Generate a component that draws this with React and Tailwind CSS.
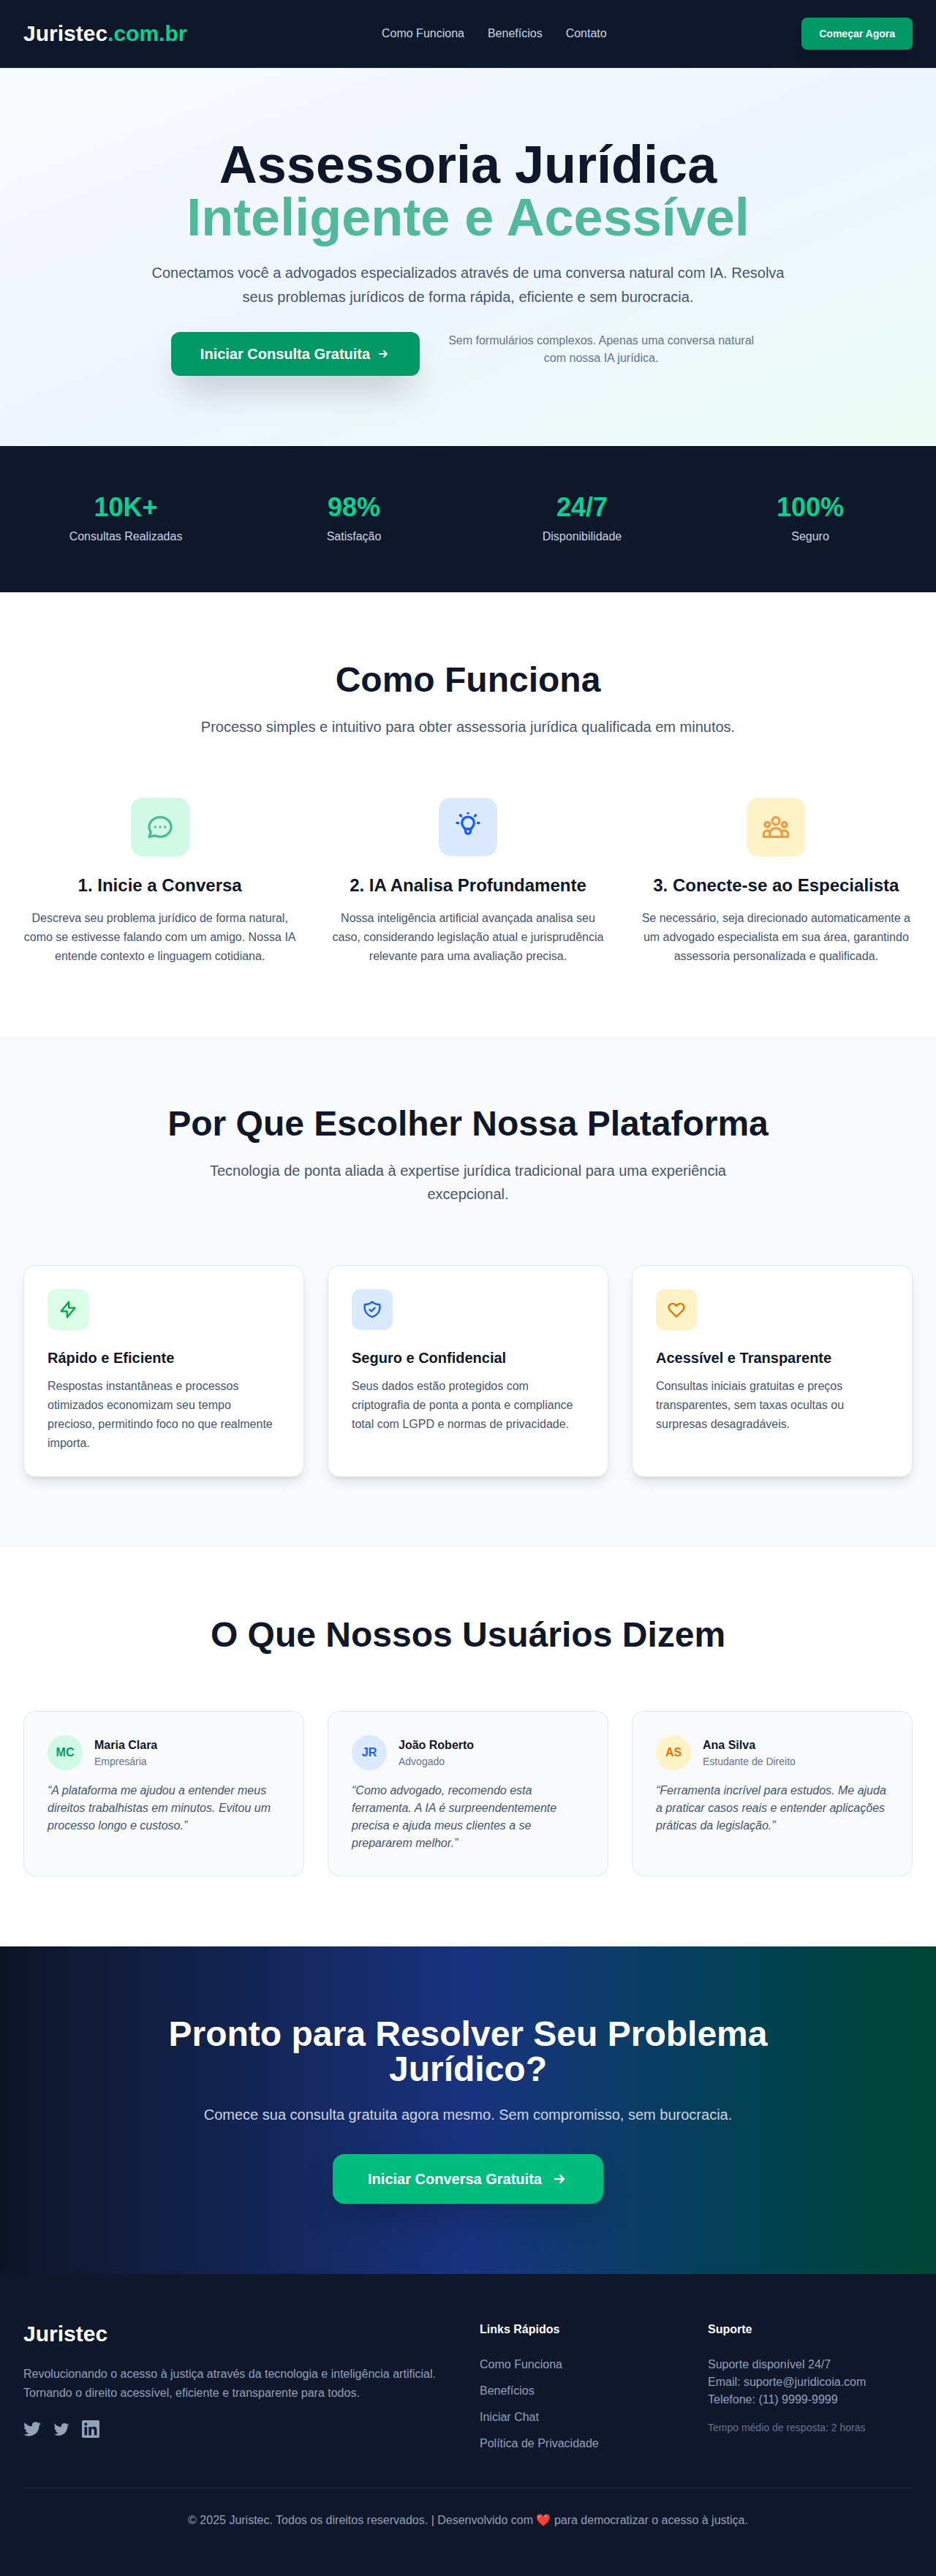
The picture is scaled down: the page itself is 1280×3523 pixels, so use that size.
const iconPaths = {
  chat: "M8 12h.01M12 12h.01M16 12h.01M21 12c0 4.418-4.03 8-9 8a9.863 9.863 0 01-4.255-.949L3 20l1.395-3.72C3.512 15.042 3 13.574 3 12c0-4.418 4.03-8 9-8s9 3.582 9 8z",
  bulb: "M9.663 17h4.673M12 3v1m6.364 1.636l-.707.707M21 12h-1M4 12H3m3.343-5.657l-.707-.707m2.828 9.9a5 5 0 117.072 0l-.548.547A3.374 3.374 0 0014 18.469V19a2 2 0 11-4 0v-.531c0-.895-.356-1.754-.988-2.386l-.548-.547z",
  group: "M17 20h5v-2a3 3 0 00-5.356-1.857M17 20H7m10 0v-2c0-.656-.126-1.283-.356-1.857M7 20H2v-2a3 3 0 015.356-1.857M7 20v-2c0-.656.126-1.283.356-1.857m0 0a5.002 5.002 0 019.288 0M15 7a3 3 0 11-6 0 3 3 0 016 0zm6 3a2 2 0 11-4 0 2 2 0 014 0zM7 10a2 2 0 11-4 0 2 2 0 014 0z",
  bolt: "M13 10V3L4 14h7v7l9-11h-7z",
  shield: "M9 12l2 2 4-4m5.618-4.016A11.955 11.955 0 0112 2.944a11.955 11.955 0 01-8.618 3.04A12.02 12.02 0 003 9c0 5.591 3.824 10.29 9 11.622 5.176-1.332 9-6.03 9-11.622 0-1.042-.133-2.052-.382-3.016z",
  heart: "M4.318 6.318a4.5 4.5 0 000 6.364L12 20.364l7.682-7.682a4.5 4.5 0 00-6.364-6.364L12 7.636l-1.318-1.318a4.5 4.5 0 00-6.364 0z",
};

function Icon({ d, className, viewBox = "0 0 24 24" }) {
  return (
    <svg className={className} viewBox={viewBox} fill="none" stroke="currentColor" strokeWidth="2" strokeLinecap="round" strokeLinejoin="round">
      <path d={d} />
    </svg>
  );
}

function Arrow({ className }) {
  return (
    <svg className={className} viewBox="0 0 20 20" fill="currentColor">
      <path fillRule="evenodd" clipRule="evenodd" d="M10.293 5.293a1 1 0 011.414 0l4 4a1 1 0 010 1.414l-4 4a1 1 0 01-1.414-1.414L12.586 11H5a1 1 0 110-2h7.586l-2.293-2.293a1 1 0 010-1.414z" />
    </svg>
  );
}

const stats = [
  ["10K+", "Consultas Realizadas"],
  ["98%", "Satisfação"],
  ["24/7", "Disponibilidade"],
  ["100%", "Seguro"],
];

const steps = [
  {
    icon: iconPaths.chat,
    box: "bg-emerald-100 text-[#4dbb96]",
    title: "1. Inicie a Conversa",
    text: "Descreva seu problema jurídico de forma natural, como se estivesse falando com um amigo. Nossa IA entende contexto e linguagem cotidiana.",
  },
  {
    icon: iconPaths.bulb,
    viewBox: "0 3.35 24 24",
    box: "bg-blue-100 text-blue-600",
    title: "2. IA Analisa Profundamente",
    text: "Nossa inteligência artificial avançada analisa seu caso, considerando legislação atual e jurisprudência relevante para uma avaliação precisa.",
  },
  {
    icon: iconPaths.group,
    box: "bg-amber-100 text-[#ec9d46]",
    title: "3. Conecte-se ao Especialista",
    text: "Se necessário, seja direcionado automaticamente a um advogado especialista em sua área, garantindo assessoria personalizada e qualificada.",
  },
];

const benefits = [
  {
    icon: iconPaths.bolt,
    box: "bg-green-100 text-green-600",
    title: "Rápido e Eficiente",
    text: "Respostas instantâneas e processos otimizados economizam seu tempo precioso, permitindo foco no que realmente importa.",
  },
  {
    icon: iconPaths.shield,
    box: "bg-blue-100 text-blue-600",
    title: "Seguro e Confidencial",
    text: "Seus dados estão protegidos com criptografia de ponta a ponta e compliance total com LGPD e normas de privacidade.",
  },
  {
    icon: iconPaths.heart,
    box: "bg-amber-100 text-amber-600",
    title: "Acessível e Transparente",
    text: "Consultas iniciais gratuitas e preços transparentes, sem taxas ocultas ou surpresas desagradáveis.",
  },
];

const testimonials = [
  {
    initials: "MC",
    color: "bg-emerald-100 text-emerald-600",
    name: "Maria Clara",
    role: "Empresária",
    quote: "“A plataforma me ajudou a entender meus direitos trabalhistas em minutos. Evitou um processo longo e custoso.”",
  },
  {
    initials: "JR",
    color: "bg-blue-100 text-blue-600",
    name: "João Roberto",
    role: "Advogado",
    quote: "“Como advogado, recomendo esta ferramenta. A IA é surpreendentemente precisa e ajuda meus clientes a se prepararem melhor.”",
  },
  {
    initials: "AS",
    color: "bg-amber-100 text-amber-600",
    name: "Ana Silva",
    role: "Estudante de Direito",
    quote: "“Ferramenta incrível para estudos. Me ajuda a praticar casos reais e entender aplicações práticas da legislação.”",
  },
];

const socials = [
  "M24 4.557c-.883.392-1.832.656-2.828.775 1.017-.609 1.798-1.574 2.165-2.724-.951.564-2.005.974-3.127 1.195-.897-.957-2.178-1.555-3.594-1.555-3.179 0-5.515 2.966-4.797 6.045-4.091-.205-7.719-2.165-10.148-5.144-1.29 2.213-.669 5.108 1.523 6.574-.806-.026-1.566-.247-2.229-.616-.054 2.281 1.581 4.415 3.949 4.89-.693.188-1.452.232-2.224.084.626 1.956 2.444 3.379 4.6 3.419-2.07 1.623-4.678 2.348-7.29 2.04 2.179 1.397 4.768 2.212 7.548 2.212 9.142 0 14.307-7.721 13.995-14.646.962-.695 1.797-1.562 2.457-2.549z",
  "M22.46 6c-.77.35-1.6.58-2.46.69.88-.53 1.56-1.37 1.88-2.38-.83.5-1.75.85-2.72 1.05C18.37 4.5 17.26 4 16 4c-2.35 0-4.27 1.92-4.27 4.29 0 .34.04.67.11.98C8.28 9.09 5.11 7.38 3 4.79c-.37.63-.58 1.37-.58 2.15 0 1.49.75 2.81 1.91 3.56-.71 0-1.37-.2-1.95-.5v.03c0 2.08 1.48 3.82 3.44 4.21a4.22 4.22 0 0 1-1.93.07 4.28 4.28 0 0 0 4 2.98 8.521 8.521 0 0 1-5.33 1.84c-.34 0-.68-.02-1.02-.06C3.44 20.29 5.7 21 8.12 21 16 21 20.33 14.46 20.33 8.79c0-.19 0-.37-.01-.56.84-.6 1.56-1.36 2.14-2.23z",
  "M20.447 20.452h-3.554v-5.569c0-1.328-.027-3.037-1.852-3.037-1.853 0-2.136 1.445-2.136 2.939v5.667H9.351V9h3.414v1.561h.046c.477-.9 1.637-1.85 3.37-1.85 3.601 0 4.267 2.37 4.267 5.455v6.286zM5.337 7.433c-1.144 0-2.063-.926-2.063-2.065 0-1.138.92-2.063 2.063-2.063 1.14 0 2.064.925 2.064 2.063 0 1.139-.925 2.065-2.064 2.065zm1.782 13.019H3.555V9h3.564v11.452zM22.225 0H1.771C.792 0 0 .774 0 1.729v20.542C0 23.227.792 24 1.771 24h20.451C23.2 24 24 23.227 24 22.271V1.729C24 .774 23.2 0 22.222 0h.003z",
];

function SectionTitle({ title, text }) {
  return (
    <div className="mb-20 text-center">
      <h2 className="text-5xl leading-none font-bold text-slate-900">{title}</h2>
      {text && <p className="mx-auto mt-6 max-w-3xl text-xl leading-relaxed text-slate-600">{text}</p>}
    </div>
  );
}

export default function App() {
  return (
    <div className="bg-white font-['Liberation_Sans',Arial,sans-serif] text-slate-900">
      <header className="border-b border-slate-800 bg-slate-900">
        <div className="flex items-center justify-between px-8 py-6">
          <div className="text-3xl font-bold text-white">
            Juristec<span className="text-emerald-400">.com.br</span>
          </div>
          <nav className="flex gap-8 text-slate-300">
            <a>Como Funciona</a>
            <a>Benefícios</a>
            <a>Contato</a>
          </nav>
          <button className="rounded-lg bg-emerald-600 px-6 py-3 text-sm font-bold text-white shadow-lg">Começar Agora</button>
        </div>
      </header>

      <section className="bg-gradient-to-br from-slate-50 via-blue-50 to-emerald-50 px-8 py-24 text-center">
        <h1 className="text-7xl leading-none font-bold text-slate-900">
          Assessoria Jurídica
          <span className="block text-[#51b899]">Inteligente e Acessível</span>
        </h1>
        <p className="mx-auto mt-6 max-w-4xl text-xl leading-relaxed text-slate-600">
          Conectamos você a advogados especializados através de uma conversa natural com IA. Resolva seus problemas jurídicos de forma rápida, eficiente e sem burocracia.
        </p>
        <div className="mt-8 flex items-start justify-center gap-6">
          <button className="flex items-center rounded-xl bg-emerald-600 px-10 py-4 text-xl font-bold text-white shadow-2xl">
            Iniciar Consulta Gratuita
            <Arrow className="ml-2 size-5" />
          </button>
          <p className="w-md text-slate-500">Sem formulários complexos. Apenas uma conversa natural com nossa IA jurídica.</p>
        </div>
      </section>

      <section className="grid grid-cols-4 gap-8 bg-slate-900 px-8 py-16 text-center">
        {stats.map(([value, label]) => (
          <div key={label}>
            <div className="mb-2 text-4xl font-bold text-emerald-400">{value}</div>
            <div className="text-slate-300">{label}</div>
          </div>
        ))}
      </section>

      <section className="bg-white px-8 py-24">
        <SectionTitle title="Como Funciona" text="Processo simples e intuitivo para obter assessoria jurídica qualificada em minutos." />
        <div className="grid grid-cols-3 gap-12 text-center">
          {steps.map((s) => (
            <div key={s.title}>
              <div className={"mx-auto mb-6 flex size-20 items-center justify-center rounded-2xl " + s.box}>
                <Icon d={s.icon} viewBox={s.viewBox} className="size-10" />
              </div>
              <h3 className="mb-4 text-2xl font-bold">{s.title}</h3>
              <p className="leading-relaxed text-slate-600">{s.text}</p>
            </div>
          ))}
        </div>
      </section>

      <section className="bg-slate-50 px-8 py-24">
        <SectionTitle
          title="Por Que Escolher Nossa Plataforma"
          text="Tecnologia de ponta aliada à expertise jurídica tradicional para uma experiência excepcional."
        />
        <div className="grid grid-cols-3 gap-8">
          {benefits.map((b) => (
            <div key={b.title} className="rounded-2xl border border-slate-200 bg-white p-8 shadow-lg">
              <div className={"mb-6 flex size-14 items-center justify-center rounded-xl " + b.box}>
                <Icon d={b.icon} className="size-7" />
              </div>
              <h3 className="mb-3 text-xl font-bold">{b.title}</h3>
              <p className="leading-relaxed text-slate-600">{b.text}</p>
            </div>
          ))}
        </div>
      </section>

      <section className="bg-white px-8 py-24">
        <SectionTitle title="O Que Nossos Usuários Dizem" />
        <div className="grid grid-cols-3 gap-8">
          {testimonials.map((t) => (
            <div key={t.name} className="rounded-2xl border border-slate-200 bg-slate-50 p-8">
              <div className="mb-4 flex items-center gap-4">
                <div className={"flex size-12 items-center justify-center rounded-full font-bold " + t.color}>{t.initials}</div>
                <div>
                  <h4 className="font-bold">{t.name}</h4>
                  <p className="text-sm text-slate-500">{t.role}</p>
                </div>
              </div>
              <p className="text-slate-600 italic">{t.quote}</p>
            </div>
          ))}
        </div>
      </section>

      <section className="relative bg-gradient-to-r from-slate-900 via-blue-900 to-emerald-900 px-8 py-24 text-center text-white">
        <div className="absolute inset-0 bg-black/10" />
        <div className="relative mx-auto max-w-4xl">
          <h2 className="mb-6 text-5xl leading-none font-bold">Pronto para Resolver Seu Problema Jurídico?</h2>
          <p className="mb-10 text-xl text-slate-300">Comece sua consulta gratuita agora mesmo. Sem compromisso, sem burocracia.</p>
          <button className="inline-flex items-center rounded-2xl bg-emerald-500 px-12 py-5 align-top text-xl font-bold shadow-2xl">
            Iniciar Conversa Gratuita
            <Arrow className="ml-3 size-6" />
          </button>
        </div>
      </section>

      <footer className="bg-slate-900 px-8 py-16 text-slate-400">
        <div className="grid grid-cols-4 gap-8">
          <div className="col-span-2">
            <h3 className="mb-6 text-3xl font-bold text-white">Juristec</h3>
            <p className="mb-6 leading-relaxed">
              Revolucionando o acesso à justiça através da tecnologia e inteligência artificial. Tornando o direito acessível, eficiente e transparente para todos.
            </p>
            <div className="flex gap-4">
              {socials.map((d, i) => (
                <svg key={i} className="size-6" viewBox="0 0 24 24" fill="currentColor">
                  <path d={d} />
                </svg>
              ))}
            </div>
          </div>
          <div>
            <h4 className="mb-6 font-bold text-white">Links Rápidos</h4>
            <ul className="space-y-3">
              <li>Como Funciona</li>
              <li>Benefícios</li>
              <li>Iniciar Chat</li>
              <li>Política de Privacidade</li>
            </ul>
          </div>
          <div>
            <h4 className="mb-6 font-bold text-white">Suporte</h4>
            <p>Suporte disponível 24/7</p>
            <p>Email: suporte@juridicoia.com</p>
            <p>Telefone: (11) 9999-9999</p>
            <p className="mt-4 text-sm text-slate-500">Tempo médio de resposta: 2 horas</p>
          </div>
        </div>
        <div className="mt-12 border-t border-slate-800 pt-8 text-center">
          <p>© 2025 Juristec. Todos os direitos reservados. | Desenvolvido com ❤️ para democratizar o acesso à justiça.</p>
        </div>
      </footer>
    </div>
  );
}
